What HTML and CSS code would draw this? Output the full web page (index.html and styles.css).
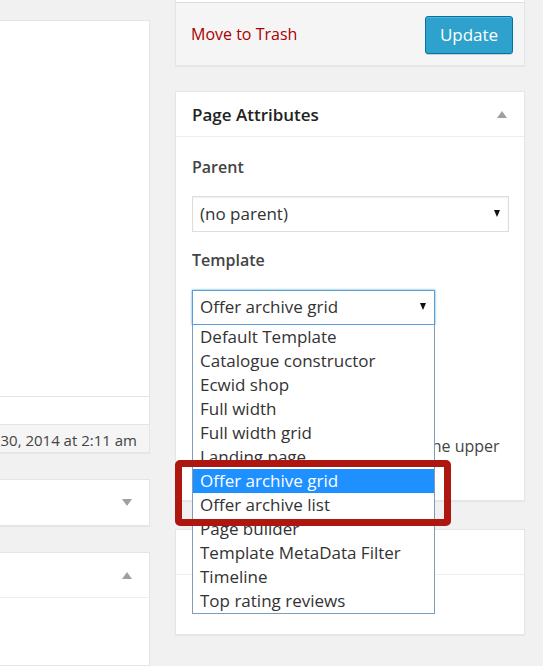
FILE: index.html
```html
<!DOCTYPE html>
<html lang="en">
<head>
<meta charset="utf-8">
<title>Page Attributes</title>
<link rel="stylesheet" href="styles.css">
</head>
<body>
<div class="page">
  <div class="col-left">
    <div class="editor">
      <div class="editor-body"></div>
      <div class="editor-strip"></div>
      <div class="editor-status"><span>Last edited by admin on October 30, 2014 at 2:11 am</span></div>
    </div>
    <div class="box">
      <div class="box-head"><span class="tri tri-down"></span></div>
    </div>
    <div class="box box-fill">
      <div class="box-head"><span class="tri tri-up"></span></div>
    </div>
  </div>

  <div class="col-right">
    <div class="box publish">
      <div class="publish-top"></div>
      <div class="publish-actions">
        <a class="trash" href="#">Move to Trash</a>
        <button class="btn-primary" type="button">Update</button>
      </div>
    </div>

    <div class="box attrs">
      <div class="box-head"><h2 class="box-title">Page Attributes</h2><span class="tri tri-up"></span></div>
      <div class="box-inside">
        <p class="field-label">Parent</p>
        <div class="select select-parent"><span>(no parent)</span><span class="caret"></span></div>
        <p class="field-label">Template</p>
        <div class="select-wrap">
          <div class="select select-focus"><span>Offer archive grid</span><span class="caret"></span></div>
          <ul class="listbox">
            <li>Default Template</li>
            <li>Catalogue constructor</li>
            <li>Ecwid shop</li>
            <li>Full width</li>
            <li>Full width grid</li>
            <li>Landing page</li>
            <li class="selected">Offer archive grid</li>
            <li>Offer archive list</li>
            <li>Page builder</li>
            <li>Template MetaData Filter</li>
            <li>Timeline</li>
            <li>Top rating reviews</li>
          </ul>
        </div>
        <p class="field-label order-label">Order</p>
        <div class="order-input">0</div>
        <p class="help">Need help? Use the Help tab in the upper right of your screen.</p>
      </div>
    </div>

    <div class="box small-box">
      <div class="box-head"><span class="tri tri-up"></span></div>
      <div class="box-inside small-inside"><p class="help">Set image</p></div>
    </div>
  </div>

  <div class="highlight"></div>
</div>
</body>
</html>
```

FILE: styles.css
```css
* { box-sizing: border-box; }

html, body {
  margin: 0;
  padding: 0;
  background: #f1f1f1;
  font-family: "Open Sans", "Noto Sans", sans-serif;
  color: #444;
  overflow: hidden;
}

.page {
  position: relative;
  display: flex;
  gap: 25px;
  width: 543px;
  height: 666px;
  overflow: hidden;
}

/* ---------- left column ---------- */
.col-left {
  width: 150px;
  padding-top: 20px;
  display: flex;
  flex-direction: column;
}

.editor {
  background: #fff;
  border: 1px solid #e5e5e5;
  border-left: none;
  box-shadow: 0 1px 1px rgba(0,0,0,.04);
}
.editor-body { height: 376px; border-bottom: 1px solid #e5e5e5; }
.editor-strip { height: 28px; border-bottom: 1px solid #e5e5e5; }
.editor-status {
  height: 27px;
  background: #f5f5f5;
  display: flex;
  justify-content: flex-end;
  align-items: center;
  overflow: hidden;
  padding: 2px 12px 0 0;
  font-size: 15px;
  color: #444;
  white-space: nowrap;
}

.box {
  background: #fff;
  border: 1px solid #e5e5e5;
  box-shadow: 0 1px 1px rgba(0,0,0,.04);
}
.col-left .box { border-left: none; margin-top: 26px; }
.col-left .box-fill { margin-top: 26px; flex: 1; }

.box-head {
  height: 45px;
  display: flex;
  align-items: center;
  justify-content: space-between;
  padding: 0 17px 0 16px;
}
.col-left .box-head { justify-content: flex-end; padding-right: 17px; }
.box-fill .box-head, .small-box .box-head, .attrs .box-head { border-bottom: 1px solid #eee; }

.tri { width: 0; height: 0; border-left: 5px solid transparent; border-right: 5px solid transparent; }
.tri-up { border-bottom: 7px solid #a0a0a0; }
.tri-down { border-top: 7px solid #a0a0a0; }

/* ---------- right column ---------- */
.col-right {
  width: 350px;
  display: flex;
  flex-direction: column;
}

.publish { border-top: none; }
.publish-top { height: 3px; border-bottom: 1px solid #ddd; }
.publish-actions {
  height: 62px;
  background: #f5f5f5;
  display: flex;
  align-items: center;
  justify-content: space-between;
  padding: 2px 11px 0 15px;
}
.trash {
  color: #a00;
  text-decoration: none;
  font-size: 16px;
  margin-bottom: 2px;
}
.btn-primary {
  width: 88px;
  height: 38px;
  background: #2ea2cc;
  border: 1px solid #0074a2;
  border-radius: 3px;
  box-shadow: inset 0 1px 0 rgba(120,200,230,.5), 0 1px 0 rgba(0,0,0,.15);
  color: #fff;
  font-family: "Open Sans", "Noto Sans", sans-serif;
  font-size: 17px;
  padding: 0 0 2px;
}

.attrs { margin-top: 25px; position: relative; }
.box-title {
  margin: 0;
  font-size: 17px;
  font-weight: 600;
  color: #222;
}

.box-inside { padding: 19px 15px 21px 16px; }

.field-label {
  margin: 0;
  font-size: 16px;
  line-height: 22px;
  font-weight: 600;
  color: #444;
}

.select {
  display: flex;
  align-items: center;
  justify-content: space-between;
  border: 1px solid #ddd;
  background: #fff;
  font-size: 17px;
  color: #333;
  padding: 0 8px 2px 7px;
  box-shadow: inset 0 1px 2px rgba(0,0,0,.07);
}
.select-parent { height: 36px; margin: 18px 0 17px; }
.caret {
  width: 0; height: 0;
  border-left: 3.5px solid transparent;
  border-right: 3.5px solid transparent;
  border-top: 7px solid #111;
}

.select-wrap { position: relative; width: 243px; margin-top: 19px; }
.select-focus {
  height: 35px;
  border-color: #5b9dd9;
  box-shadow: 0 0 2px rgba(30,140,190,.8);
}

.listbox {
  position: absolute;
  top: 100%;
  left: 0;
  width: 243px;
  margin: 0;
  padding: 0;
  list-style: none;
  background: #fff;
  border: 1px solid #7f9db9;
  border-top: none;
  z-index: 2;
}
.listbox li {
  height: 24px;
  line-height: 23px;
  padding-left: 7px;
  font-size: 17px;
  color: #333;
  white-space: nowrap;
}
.listbox li.selected { background: #1e90ff; color: #fff; }

.order-label { margin-top: 18px; }
.order-input {
  width: 60px;
  height: 35px;
  margin-top: 10px;
  border: 1px solid #ddd;
  font-size: 16px;
  padding: 6px 8px;
}

.help {
  margin: 25px 0 0;
  font-size: 16px;
  line-height: 22px;
  color: #444;
}

.small-box { margin-top: 28px; }
.small-inside { height: 59px; padding-top: 14px; }
.small-inside .help { margin: 0; }

/* ---------- annotation overlay ---------- */
.highlight {
  position: absolute;
  left: 175px;
  top: 460px;
  width: 276px;
  height: 66px;
  border: 7px solid #ae1710;
  border-radius: 5px;
  z-index: 5;
}
```
